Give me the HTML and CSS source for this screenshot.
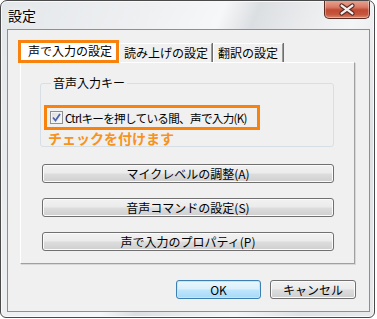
FILE: index.html
```html
<!DOCTYPE html>
<html lang="ja">
<head>
  <meta charset="UTF-8" />
  <title>設定</title>
  <link rel="stylesheet" href="styles.css">
</head>
<body>
  <div class="window">
    <div class="titlebar">
      <span class="title">設定</span>
      <button class="close" title="閉じる">
        <svg width="45" height="17" viewBox="0 0 45 17">
          <path d="M17 4.5 L28 12.5 M28 4.5 L17 12.5" stroke="#5a2a22" stroke-width="4.6" stroke-linecap="round" fill="none"/>
          <path d="M17 4.5 L28 12.5 M28 4.5 L17 12.5" stroke="#f4eeee" stroke-width="2.4" stroke-linecap="round" fill="none"/>
        </svg>
      </button>
    </div>

    <div class="client">
      <div class="tabstrip">
        <div class="tab active">声で入力の設定</div>
        <div class="tab">読み上げの設定</div>
        <div class="tab third">翻訳の設定</div>
      </div>

      <div class="panel">
        <fieldset class="group">
          <legend>音声入力キー</legend>
          <label class="check">
            <span class="box">
              <svg width="11" height="11" viewBox="0 0 11 11">
                <path d="M2 5.5 L4.5 8.5 L9 2" stroke="#4b66b0" stroke-width="1.8" fill="none"/>
              </svg>
            </span>
            <span class="check-text">Ctrlキーを押している間、声で入力(K)</span>
          </label>
          <div class="note">チェックを付けます</div>
        </fieldset>

        <button class="btn wide first">マイクレベルの調整(A)</button>
        <button class="btn wide">音声コマンドの設定(S)</button>
        <button class="btn wide">声で入力のプロパティ(P)</button>
      </div>

      <div class="footer">
        <button class="btn ok">OK</button>
        <button class="btn cancel">キャンセル</button>
      </div>
    </div>
  </div>
</body>
</html>
```

FILE: styles.css
```css
body {
  margin: 0;
  background: #fff;
  font-family: "Noto Sans CJK JP", "Liberation Sans", sans-serif;
  font-size: 12px;
  color: #000;
}
.window {
  width: 375px;
  height: 318px;
  box-sizing: border-box;
  border: 1px solid #4a4a4a;
  border-radius: 7px 7px 6px 6px;
  background: linear-gradient(112deg, #e4e7ea 0%, #eef0f2 30%, #f6f7f8 45%, #dcdfe2 52%, #e9ebed 62%, #f4f5f6 72%, #dfe2e5 85%, #e8eaec 100%);
  box-shadow: inset 0 0 0 1px #f8f9fa;
  overflow: hidden;
}
.titlebar {
  height: 28px;
  display: flex;
  align-items: flex-start;
}
.title {
  margin: 6px 0 0 7px;
  font-size: 14px;
  line-height: 16px;
  color: #000;
  text-shadow: 0 0 6px #fff;
}
.close {
  margin: -1px 4px 0 auto;
  width: 46px;
  height: 19px;
  padding: 0;
  border: 1px solid #5b2a22;
  border-top: none;
  border-radius: 0 0 5px 5px;
  background: linear-gradient(#e9a896 0%, #d87a66 40%, #c24a33 55%, #c5563d 80%, #d58a70 100%);
  box-shadow: inset 0 0 0 1px rgba(255,255,255,0.35);
  display: flex;
  align-items: center;
  justify-content: center;
}
.client {
  margin-left: 6px;
  width: 363px;
  height: 283px;
  box-sizing: border-box;
  border: 1px solid #8d8f92;
  background: #f0f0f0;
}
.tabstrip {
  display: flex;
  align-items: flex-end;
  margin-top: 10px;
  padding-left: 10px;
  height: 22px;
}
.tab {
  height: 19px;
  box-sizing: border-box;
  border-top: 1px solid #fff;
  border-left: 1px solid #fff;
  border-right: 1px solid #9a9a9a;
  box-shadow: 1px 0 0 #6e6e6e;
  line-height: 17px;
  padding: 0 4px;
  width: 93px;
  background: #f0f0f0;
  white-space: nowrap;
}
.tab.third {
  width: 70px;
  margin-left: 1px;
}
.tab.active {
  position: relative;
  z-index: 1;
  width: 101px;
  height: 23px;
  margin-bottom: -1px;
  border: 3px solid #f7830e;
  box-shadow: none;
  background: #fff;
  line-height: 16px;
  padding: 0 0 0 7px;
}
.panel {
  width: 335px;
  height: 202px;
  margin-left: 12px;
  box-sizing: border-box;
  border-top: 1px solid #fff;
  border-left: 1px solid #fff;
  border-right: 1px solid #a0a0a0;
  border-bottom: 1px solid #a0a0a0;
  box-shadow: 1px 1px 0 #d8d8d8;
  padding-top: 13px;
}
.group {
  margin: 0 0 0 19px;
  width: 294px;
  box-sizing: border-box;
  padding: 15px 0 0 3px;
  border: 1px solid #d5dfe5;
  border-radius: 3px;
  min-inline-size: 0;
}
.group legend {
  margin-left: 7px;
  padding: 0 2px;
  line-height: 14px;
}
.check {
  display: flex;
  align-items: center;
  width: 216px;
  height: 25px;
  box-sizing: border-box;
  border: 3px solid #f7830e;
  padding: 0 3px;
  white-space: nowrap;
}
.check-text {
  font-size: 11.6px;
  letter-spacing: -0.7px;
}
.box {
  width: 13px;
  height: 13px;
  box-sizing: border-box;
  border: 1px solid #8e8f8f;
  background: linear-gradient(135deg, #dcdcdc, #fbfbfb);
  box-shadow: inset 0 0 0 1px #f4f4f4;
  display: flex;
  align-items: center;
  justify-content: center;
  margin-right: 2px;
  flex-shrink: 0;
}
.note {
  margin-left: 4px;
  font-size: 14px;
  line-height: 16px;
  font-weight: bold;
  color: #f7921e;
}
.btn {
  display: block;
  height: 19px;
  box-sizing: border-box;
  padding: 0;
  border: 1px solid #707070;
  border-radius: 3px;
  background: linear-gradient(#f2f2f2 0%, #ebebeb 48%, #dddddd 52%, #cfcfcf 100%);
  box-shadow: inset 0 0 0 1px #fbfbfb;
  font-family: inherit;
  font-size: 12px;
  line-height: 16px;
  color: #000;
}
.wide {
  width: 292px;
  margin: 15px 0 0 21px;
}
.wide.first {
  margin-top: 17px;
}
.footer {
  display: flex;
  justify-content: flex-end;
  gap: 9px;
  margin-top: 16px;
  padding-right: 13px;
}
.ok {
  width: 85px;
  border-color: #3c7fb1;
  background: linear-gradient(#eaf6fd 0%, #d9f0fc 48%, #bee6fd 52%, #a7d9f5 100%);
  box-shadow: inset 0 0 0 1px #c4e6f8;
}
.cancel {
  width: 86px;
}
```
